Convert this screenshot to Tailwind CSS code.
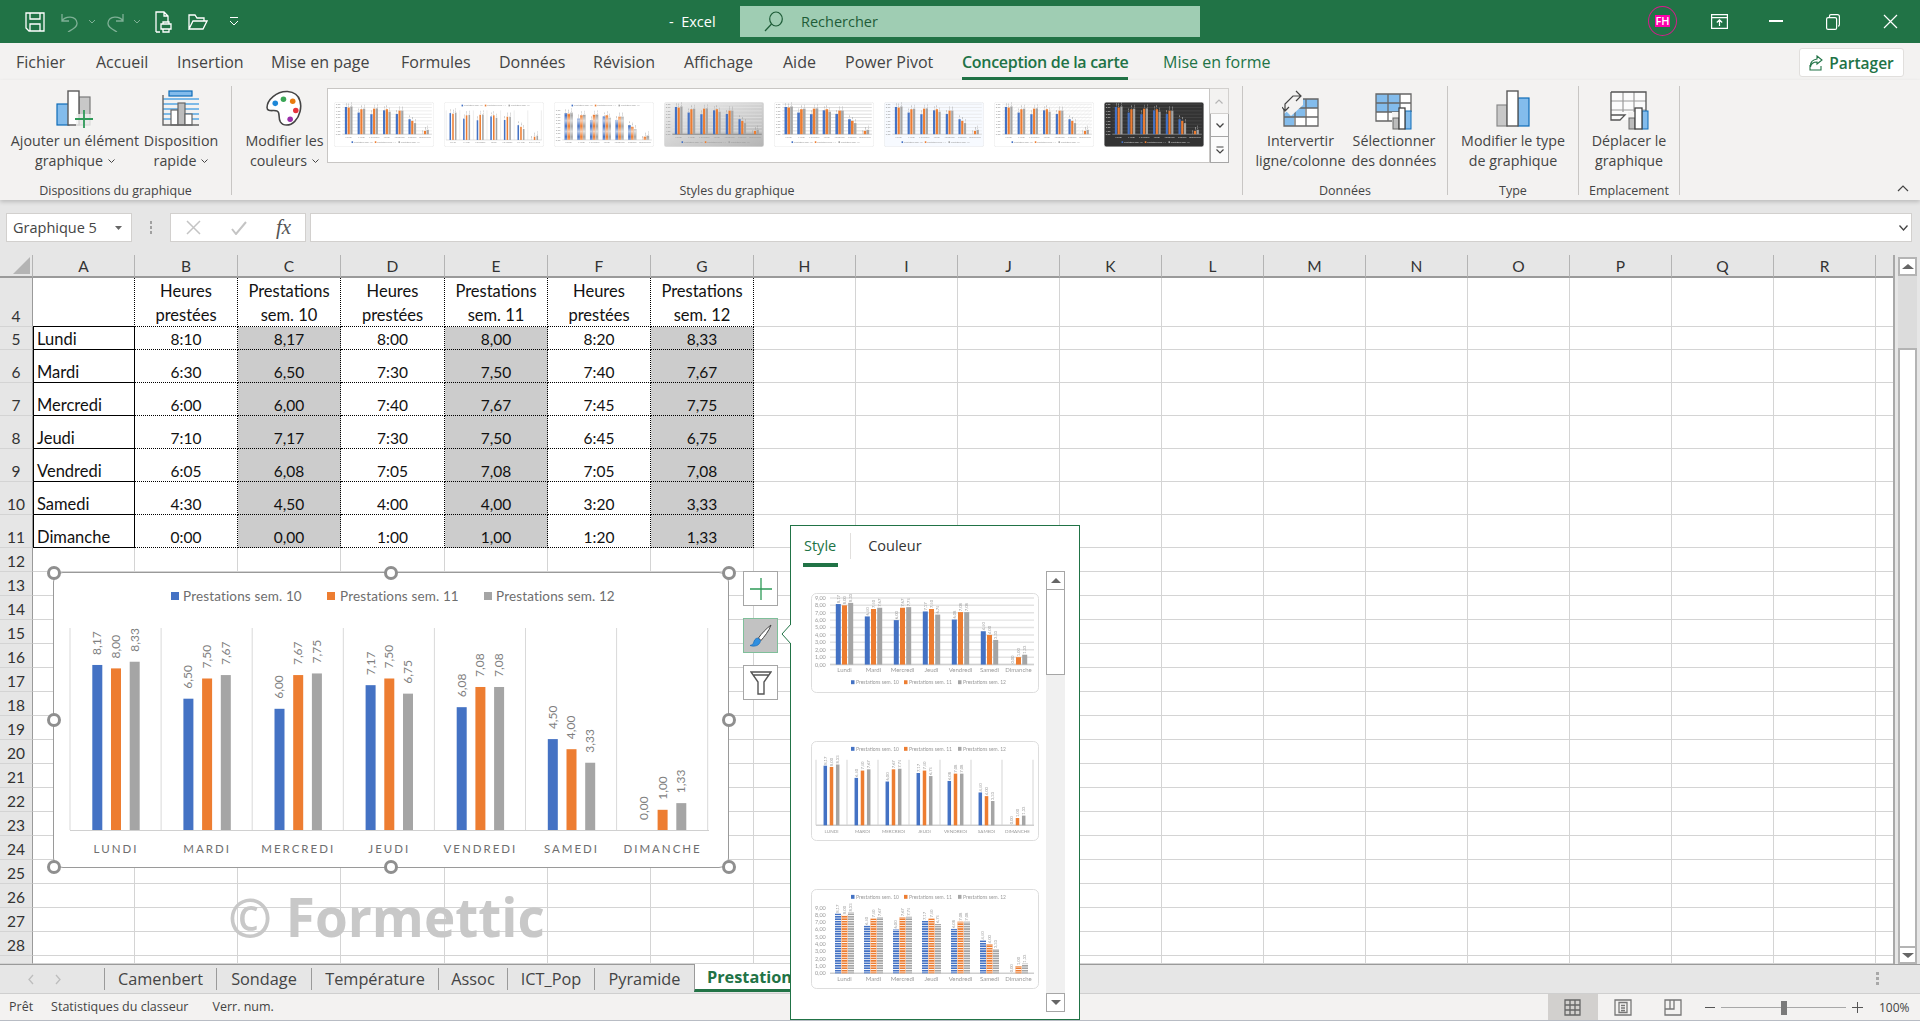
<!DOCTYPE html>
<html lang="fr">
<head>
    <meta charset="UTF-8">
    <title>Excel</title>
    <script src="https://cdn.jsdelivr.net/npm/@tailwindcss/browser@4"></script>
</head>
<body>
<div class="relative w-[1920px] h-[1021px] overflow-hidden flex flex-col bg-[#e6e6e6] font-['Open_Sans',sans-serif] text-[#444444]">

    <!-- Title bar -->
    <div class="h-[43px] shrink-0 bg-[#217346] flex items-center text-white">
        <div class="flex items-center pl-[25px] w-[669px]">
            <svg class="w-[20px] h-[20px]" viewBox="0 0 20 20" fill="none" stroke="#fff" stroke-width="1.3"><path d="M1 1h18v18H4l-3-3zM5 1v6h10V1M5 19v-7h10v7"/></svg>
            <svg class="w-[20px] h-[20px] ml-[15px]" viewBox="0 0 20 20" fill="none" stroke="#7fb096" stroke-width="1.3"><path d="M2 2v7h7M2 9c3-5 14-6 15 2 .5 4-4 6-9 9"/></svg>
            <svg class="w-[8px] h-[5px] ml-[8px]" viewBox="0 0 8 5" fill="none" stroke="#7fb096"><path d="M1 1l3 3 3-3"/></svg>
            <svg class="w-[20px] h-[20px] ml-[9px]" viewBox="0 0 20 20" fill="none" stroke="#7fb096" stroke-width="1.3"><path d="M18 2v7h-7M18 9C15 4 4 3 3 11c-.5 4 4 6 9 9"/></svg>
            <svg class="w-[8px] h-[5px] ml-[8px]" viewBox="0 0 8 5" fill="none" stroke="#7fb096"><path d="M1 1l3 3 3-3"/></svg>
            <svg class="w-[18px] h-[22px] ml-[14px]" viewBox="0 0 18 22" fill="none" stroke="#fff" stroke-width="1.3"><path d="M1 21V1h8l4 4v6M9 1v4h4M1 21h4M6 13h10v5H6zM8 13v-2h6v2M8 18v3h6v-3"/></svg>
            <svg class="w-[20px] h-[16px] ml-[15px]" viewBox="0 0 20 16" fill="none" stroke="#fff" stroke-width="1.3"><path d="M1 15V1h6l2 3h7v3M1 15h14l4-8H5z"/></svg>
            <svg class="w-[10px] h-[9px] ml-[21px]" viewBox="0 0 10 9" fill="none" stroke="#fff"><path d="M1 .5h8M1 4l4 4 4-4"/></svg>
        </div>
        <div class="w-[71px] text-[14.5px] whitespace-nowrap">-&nbsp; Excel</div>
        <div class="w-[460px] h-[31px] bg-[#9fcdb3] flex items-center text-[14.5px] text-[#1e5c38]">
            <svg class="w-[19px] h-[21px] ml-[24px]" viewBox="0 0 19 21" fill="none" stroke="#1e5c38" stroke-width="1.2"><ellipse cx="12" cy="8" rx="6.3" ry="7"/><path d="M7.5 13L1 20"/></svg>
            <span class="ml-[18px]">Rechercher</span>
        </div>
        <div class="flex-1 relative h-full">
            <div class="absolute left-[448px] top-[6px] w-[29px] h-[30px] rounded-[50%] border border-[#d81b8c] flex items-center justify-center">
                <span class="bg-[#ff00aa] text-white text-[11px] leading-[12px] font-semibold">FH</span>
            </div>
            <svg class="absolute left-[511px] top-[14px] w-[17px] h-[15px]" viewBox="0 0 17 15" fill="none" stroke="#fff" stroke-width="1.2"><path d="M.6.6h15.8v13.8H.6zM.6 3.6h15.8M8.5 12V6M5.8 8.5l2.7-2.7 2.7 2.7"/></svg>
            <div class="absolute left-[569px] top-[20px] w-[14px] h-[2px] bg-white"></div>
            <svg class="absolute left-[626px] top-[14px] w-[14px] h-[16px]" viewBox="0 0 14 16" fill="none" stroke="#fff" stroke-width="1.2"><rect x=".6" y="3.6" width="10" height="11.8" rx="1.5"/><path d="M3.5 3.5V2c0-.8.6-1.4 1.4-1.4h6.5c1 0 2 .8 2 2v8c0 1-.6 1.6-1.4 1.6"/></svg>
            <svg class="absolute left-[683px] top-[14px] w-[15px] h-[15px]" viewBox="0 0 15 15" fill="none" stroke="#fff" stroke-width="1.2"><path d="M1 1l13 13M14 1L1 14"/></svg>
        </div>
    </div>

    <!-- Ribbon tabs -->
    <div class="h-[37px] shrink-0 bg-[#f3f2f1] relative flex pl-[16px] pt-[6px] text-[16px] leading-[26px] whitespace-nowrap text-[#444444]">
        <div class="w-[80px]">Fichier</div>
        <div class="w-[81px]">Accueil</div>
        <div class="w-[94px]">Insertion</div>
        <div class="w-[130px]">Mise en page</div>
        <div class="w-[98px]">Formules</div>
        <div class="w-[94px]">Données</div>
        <div class="w-[91px]">Révision</div>
        <div class="w-[99px]">Affichage</div>
        <div class="w-[62px]">Aide</div>
        <div class="w-[117px]">Power Pivot</div>
        <div class="w-[201px] h-[32px] font-semibold text-[#217346]"><span class="inline-block border-b-[4px] border-[#217346] pb-[2px] tracking-[-0.3px]">Conception de la carte</span></div>
        <div class="text-[#217346]">Mise en forme</div>
        <div class="absolute left-[1799px] top-[5px] w-[105px] h-[29px] bg-white border border-[#e1dfdd] rounded-[3px] flex items-center justify-center gap-[6px] text-[#217346] font-semibold text-[15.5px]">
            <svg class="w-[14px] h-[16px]" viewBox="0 0 14 16" fill="none" stroke="#217346" stroke-width="1.1"><path d="M8 1l5 4-5 4V7C4 7 2 9 1.500 12c-.5-4 1-7 6.500-8zM1 10v5h11v-4"/></svg>
            Partager
        </div>
    </div>

    <!-- Ribbon -->
    <div class="h-[120px] shrink-0 bg-[#f3f2f1] shadow-[0_2px_4px_rgba(0,0,0,0.18)] flex pt-[6px] text-[14.25px] leading-[20px] relative z-10">
        <!-- Dispositions du graphique -->
        <div class="w-[232px] h-[109px] border-r border-[#c8c6c4] relative flex pl-[8px]">
            <div class="w-[134px] flex flex-col items-center whitespace-nowrap">
                <svg class="w-[38px] h-[40px] mt-[4px] mb-[1px]" viewBox="0 0 38 40">
                    <rect x="1" y="14" width="12" height="21" fill="#83bcec" stroke="#0e6cb8" stroke-width="1.2"/>
                    <rect x="23" y="7" width="11" height="28" fill="#c8c8c8" stroke="#7a7a7a" stroke-width="1.2"/>
                    <rect x="12" y="1" width="11" height="34" fill="#fff" stroke="#5a5a5a" stroke-width="1.4"/>
                    <rect x="20" y="24" width="16" height="16" fill="#f3f2f1" opacity=".8"/>
                    <path d="M28 20v18M19 29h18" stroke="#2e9a58" stroke-width="1.8"/>
                </svg>
                <div>Ajouter un élément</div>
                <div class="flex items-center gap-[5px]">graphique <svg class="w-[7px] h-[4px]" viewBox="0 0 7 4" fill="none" stroke="#444"><path d="M.5.5l3 3 3-3"/></svg></div>
            </div>
            <div class="w-[78px] flex flex-col items-center whitespace-nowrap">
                <svg class="w-[38px] h-[40px] mt-[4px] mb-[1px]" viewBox="0 0 38 40">
                    <rect x="7" y="1" width="23" height="5" fill="#83bcec" stroke="#0e6cb8" stroke-width="1.2"/>
                    <path d="M1 9h36M1 14h36M1 19h36M1 24h36M1 29h36" stroke="#56a7e4" stroke-width="1.6"/>
                    <rect x="9" y="20" width="7" height="15" fill="#fff" stroke="#666" stroke-width="1.2"/>
                    <rect x="16" y="13" width="7" height="22" fill="#bcbcbc" stroke="#666" stroke-width="1.2"/>
                    <rect x="23" y="24" width="7" height="11" fill="#fff" stroke="#666" stroke-width="1.2"/>
                    <path d="M1 5v30h36" fill="none" stroke="#666" stroke-width="1.4"/>
                </svg>
                <div>Disposition</div>
                <div class="flex items-center gap-[5px]">rapide <svg class="w-[7px] h-[4px]" viewBox="0 0 7 4" fill="none" stroke="#444"><path d="M.5.5l3 3 3-3"/></svg></div>
            </div>
            <div class="absolute bottom-[-6px] left-0 w-[231px] text-center text-[12.5px]">Dispositions du graphique</div>
        </div>

        <!-- Styles du graphique -->
        <div class="w-[1011px] h-[109px] border-r border-[#c8c6c4] relative flex">
            <div class="w-[95px] flex flex-col items-center whitespace-nowrap pl-[10px] mr-0">
                <svg class="w-[37px] h-[37px] mt-[4px] mb-[4px]" viewBox="0 0 36 36">
                    <path d="M21 1.500C10 1 1 10 1 17c0 5 7 2 10 3.500s.5 6 3 10.500c2.500 4 9 4.500 14-.5s7-14 5-20C31.500 5 27 2 21 1.500z" fill="#fff" stroke="#444" stroke-width="1.5"/>
                    <circle cx="9" cy="13" r="2.700" fill="#1e88d8"/><circle cx="17" cy="9" r="2.700" fill="#3aa655"/><circle cx="26" cy="11" r="2.700" fill="#e97a0c"/><circle cx="29" cy="20" r="2.700" fill="#e8333c"/><circle cx="23.500" cy="28.500" r="2.700" fill="#9a2ea8"/>
                </svg>
                <div>Modifier les</div>
                <div class="flex items-center gap-[5px]">couleurs <svg class="w-[7px] h-[4px]" viewBox="0 0 7 4" fill="none" stroke="#444"><path d="M.5.5l3 3 3-3"/></svg></div>
            </div>
            <div class="mt-[2px] w-[902px] h-[75px] flex">
                <div class="w-[883px] h-full bg-white border border-[#c8c6c4] flex gap-[10px] pl-[6px] pt-[13px]">
                    <div data-thumb="1" data-size="r"></div>
                    <div data-thumb="2" data-size="r"></div>
                    <div data-thumb="3" data-size="r"></div>
                    <div data-thumb="4" data-size="r"></div>
                    <div data-thumb="5" data-size="r"></div>
                    <div data-thumb="6" data-size="r"></div>
                    <div data-thumb="7" data-size="r"></div>
                    <div data-thumb="8" data-size="r"></div>
                </div>
                <div class="w-[19px] flex flex-col">
                    <div class="h-[26px] border border-l-0 border-[#d2d0ce] flex items-center justify-center"><svg class="w-[8px] h-[5px]" viewBox="0 0 8 5" fill="none" stroke="#b5b5b5" stroke-width="1.2"><path d="M.5 4.500L4 1l3.500 3.500"/></svg></div>
                    <div class="h-[23px] border border-t-0 border-[#a6a6a6] bg-[#fbfbfb] flex items-center justify-center"><svg class="w-[8px] h-[5px]" viewBox="0 0 8 5" fill="none" stroke="#444" stroke-width="1.3"><path d="M.5.5L4 4 7.500.5"/></svg></div>
                    <div class="h-[26px] border border-t-0 border-[#a6a6a6] bg-[#fbfbfb] flex flex-col items-center justify-center"><svg class="w-[8px] h-[8px]" viewBox="0 0 8 8" fill="none" stroke="#444" stroke-width="1.2"><path d="M.5 1h7M.5 3.500L4 7l3.500-3.500"/></svg></div>
                </div>
            </div>
            <div class="absolute bottom-[-6px] left-0 w-full text-center text-[12.5px]">Styles du graphique</div>
        </div>

        <!-- Données -->
        <div class="w-[205px] h-[109px] border-r border-[#c8c6c4] relative flex">
            <div class="w-[115px] flex flex-col items-center whitespace-nowrap">
                <svg class="w-[38px] h-[40px] mt-[4px] mb-[1px]" viewBox="0 0 38 40">
                    <path d="M2 9h34v27H2z" fill="#fff"/>
                    <path d="M2 36V24L18 9h18v9H23v9H12v9z" fill="#83bcec"/>
                    <path d="M2 9h34v27H2zM2 18h34M2 27h34M13 9v27M24 9v27" fill="none" stroke="#666" stroke-width="1.3"/>
                    <path d="M1 2h20v13L9 26 1 18z" fill="#f3f2f1"/>
                    <path d="M14 1l5 5-5 5M19 6H11L3 14v6M0 17l3 4 4-4" fill="none" stroke="#444" stroke-width="1.200"/>
                </svg>
                <div>Intervertir</div>
                <div>ligne/colonne</div>
            </div>
            <div class="w-[72px] flex flex-col items-center whitespace-nowrap">
                <svg class="w-[38px] h-[40px] mt-[4px] mb-[1px]" viewBox="0 0 38 40">
                    <path d="M1 4h35v27H1z" fill="#fff"/>
                    <path d="M1 4h24v18H1z" fill="#83bcec"/>
                    <path d="M1 4h35v27H1zM1 13h35M1 22h35M13 4v27M25 4v27" fill="none" stroke="#666" stroke-width="1.300"/>
                    <rect x="17" y="22" width="20" height="18" fill="#f3f2f1"/>
                    <rect x="18" y="28" width="6" height="11" fill="#bcbcbc" stroke="#666"/>
                    <rect x="30" y="21" width="6" height="18" fill="#83bcec" stroke="#0e6cb8"/>
                    <rect x="24" y="18" width="6" height="21" fill="#fff" stroke="#444" stroke-width="1.300"/>
                </svg>
                <div>Sélectionner</div>
                <div>des données</div>
            </div>
            <div class="absolute bottom-[-6px] left-0 w-[204px] text-center text-[12.5px]">Données</div>
        </div>

        <!-- Type -->
        <div class="w-[131px] h-[109px] border-r border-[#c8c6c4] relative flex flex-col items-center whitespace-nowrap">
            <svg class="w-[38px] h-[40px] mt-[4px] mb-[1px]" viewBox="0 0 38 40">
                <rect x="3" y="15" width="10" height="21" fill="#c8c8c8" stroke="#8a8a8a" stroke-width="1.200"/>
                <rect x="24" y="8" width="11" height="28" fill="#83bcec" stroke="#0e6cb8" stroke-width="1.200"/>
                <rect x="13" y="1" width="11" height="35" fill="#fff" stroke="#5a5a5a" stroke-width="1.400"/>
            </svg>
            <div>Modifier le type</div>
            <div>de graphique</div>
            <div class="absolute bottom-[-6px] left-0 w-full text-center text-[12.5px]">Type</div>
        </div>

        <!-- Emplacement -->
        <div class="w-[101px] h-[109px] border-r border-[#c8c6c4] relative flex flex-col items-center whitespace-nowrap">
            <svg class="w-[40px] h-[40px] mt-[4px] mb-[1px]" viewBox="0 0 40 40">
                <path d="M2 2h35v25l-3 3H9l-7-1z" fill="#fbfbfb"/>
                <path d="M2 11h35M2 20h35M14 2v20M25 2v20" stroke="#9a9a9a" stroke-width="1.200"/>
                <path d="M2 2h35v25M2 2v28h9l5-5H2" fill="none" stroke="#555" stroke-width="1.300"/>
                <rect x="19" y="22" width="21" height="18" fill="#f3f2f1"/>
                <rect x="20" y="28" width="6" height="11" fill="#bcbcbc" stroke="#666"/>
                <rect x="33" y="21" width="6" height="18" fill="#83bcec" stroke="#0e6cb8"/>
                <rect x="26" y="18" width="7" height="21" fill="#fff" stroke="#444" stroke-width="1.300"/>
            </svg>
            <div>Déplacer le</div>
            <div>graphique</div>
            <div class="absolute bottom-[-6px] left-0 w-full text-center text-[12.5px]">Emplacement</div>
        </div>

        <svg class="absolute left-[1897px] top-[105px] w-[12px] h-[7px]" viewBox="0 0 12 7" fill="none" stroke="#444" stroke-width="1.200"><path d="M1 6l5-5 5 5"/></svg>
    </div>

    <!-- Formula bar -->
    <div class="h-[55px] shrink-0 flex pt-[13px] pl-[6px]">
        <div class="w-[126px] h-[29px] bg-white border border-[#d2d0ce] flex items-center justify-between px-[6px] text-[14.5px]">
            Graphique 5
            <svg class="w-[7px] h-[4px] mr-[3px]" viewBox="0 0 7 4"><path d="M0 0h7L3.500 4z" fill="#666"/></svg>
        </div>
        <div class="w-[38px] h-[29px] flex flex-col items-center justify-center gap-[2px]">
            <div class="w-[2px] h-[3px] bg-[#a0a0a0]"></div><div class="w-[2px] h-[3px] bg-[#a0a0a0]"></div><div class="w-[2px] h-[3px] bg-[#a0a0a0]"></div>
        </div>
        <div class="w-[136px] h-[29px] bg-white border border-[#d2d0ce] flex items-center">
            <svg class="w-[15px] h-[15px] ml-[15px]" viewBox="0 0 15 15" fill="none" stroke="#c4c4c4" stroke-width="1.500"><path d="M1 1l13 13M14 1L1 14"/></svg>
            <svg class="w-[16px] h-[14px] ml-[30px]" viewBox="0 0 16 14" fill="none" stroke="#c4c4c4" stroke-width="2"><path d="M1 8l4 5L15 1"/></svg>
            <span class="ml-[29px] font-['Liberation_Serif',serif] italic text-[21px] text-[#555555]">fx</span>
        </div>
        <div class="ml-[4px] w-[1602px] h-[29px] bg-white border border-[#d2d0ce] flex items-center justify-end pr-[3px]">
            <svg class="w-[9px] h-[6px]" viewBox="0 0 9 6" fill="none" stroke="#444" stroke-width="1.300"><path d="M.5.5L4.500 5 8.500.5"/></svg>
        </div>
    </div>

    <!-- Sheet -->
    <div class="h-[709px] shrink-0 flex bg-[#e6e6e6]">
        <div id="grid" class="w-[1895px] h-full grid grid-cols-[33px_102px_103px_103px_104px_103px_103px_103px_repeat(10,102px)_102px_18px] grid-rows-[23px_49px_23px_repeat(6,33px)_repeat(17,24px)_8px] font-['Lato',sans-serif] text-[15.5px] leading-[19px] text-[#111111] overflow-hidden border-r-2 border-[#a8a8a8]"></div>
        <div class="ml-[3px] w-[19px] h-full flex flex-col pt-[2px]">
            <div class="h-[19px] bg-white border-2 border-[#b4b4b4] flex items-center justify-center"><div class="w-0 h-0 border-x-[6px] border-x-transparent border-b-[5px] border-b-[#666666]"></div></div>
            <div class="h-[72px] bg-[#dcdcdc]"></div>
            <div class="flex-1 bg-white border-x-2 border-t-2 border-[#b4b4b4]"></div>
            <div class="h-[18px] bg-white border-2 border-[#b4b4b4] flex items-center justify-center"><div class="w-0 h-0 border-x-[6px] border-x-transparent border-t-[5px] border-t-[#666666]"></div></div>
        </div>
    </div>

    <!-- Sheet tabs -->
    <div class="h-[29px] shrink-0 bg-[#e6e6e6] border-t border-[#9a9a9a] flex text-[16.3px] text-[#444444] relative">
        <div class="w-[104px] flex items-center pl-[28px] gap-[21px]">
            <svg class="w-[6px] h-[11px]" viewBox="0 0 6 11" fill="none" stroke="#bdbdbd" stroke-width="1.300"><path d="M5 1L1 5.500 5 10"/></svg>
            <svg class="w-[6px] h-[11px]" viewBox="0 0 6 11" fill="none" stroke="#bdbdbd" stroke-width="1.300"><path d="M1 1l4 4.500L1 10"/></svg>
        </div>
        <div class="w-[112px] my-[3px] border-l border-[#9a9a9a] flex items-center justify-center">Camenbert</div>
        <div class="w-[95px] my-[3px] border-l border-[#9a9a9a] flex items-center justify-center">Sondage</div>
        <div class="w-[127px] my-[3px] border-l border-[#9a9a9a] flex items-center justify-center">Température</div>
        <div class="w-[69px] my-[3px] border-l border-[#9a9a9a] flex items-center justify-center">Assoc</div>
        <div class="w-[87px] my-[3px] border-l border-[#9a9a9a] flex items-center justify-center">ICT_Pop</div>
        <div class="w-[100px] my-[3px] border-l border-[#9a9a9a] flex items-center justify-center">Pyramide</div>
        <div class="w-[110px] h-[28px] -mt-px bg-white border-l border-[#9a9a9a] border-b-[3px] border-b-[#217346] pl-[12px] font-bold text-[#217346] leading-[26px] whitespace-nowrap">Prestations</div>
        <div class="absolute left-[1876px] top-[7px] flex flex-col gap-[2px]">
            <div class="w-[3px] h-[3px] bg-[#a8a8a8]"></div><div class="w-[3px] h-[3px] bg-[#a8a8a8]"></div><div class="w-[3px] h-[3px] bg-[#a8a8a8]"></div>
        </div>
    </div>

    <!-- Status bar -->
    <div class="h-[28px] shrink-0 bg-[#f3f2f1] border-t border-[#cfcfcf] border-b border-b-[#b8bcc4] flex items-center text-[12.5px] text-[#444444] relative">
        <span class="ml-[9px]">Prêt</span>
        <span class="ml-[18px]">Statistiques du classeur</span>
        <span class="ml-[24px]">Verr. num.</span>
        <div class="absolute left-[1548px] top-0 w-[50px] h-full bg-[#d2d0ce]"></div>
        <svg class="absolute left-[1564px] top-[5px] w-[17px] h-[17px]" viewBox="0 0 17 17" fill="none" stroke="#666" stroke-width="1.300"><path d="M1 1h15v15H1zM1 6h15M1 11h15M6 1v15M11 1v15"/></svg>
        <svg class="absolute left-[1614px] top-[5px] w-[18px] h-[17px]" viewBox="0 0 18 17" fill="none" stroke="#777" stroke-width="1.300"><path d="M1 1h16v15H1zM5 3.500h8v10H5zM7 6.500h4M7 9h4M7 11.500h4"/></svg>
        <svg class="absolute left-[1664px] top-[5px] w-[18px] h-[17px]" viewBox="0 0 18 17" fill="none" stroke="#777" stroke-width="1.300"><path d="M1 1h16v15H1zM1 10h9V1M6 1v9"/></svg>
        <div class="absolute left-[1705px] top-[13px] w-[10px] h-px bg-[#555555]"></div>
        <div class="absolute left-[1721px] top-[13px] w-[125px] h-px bg-[#a8a8a8]"></div>
        <div class="absolute left-[1781px] top-[7px] w-[6px] h-[14px] bg-[#7a7a7a]"></div>
        <svg class="absolute left-[1852px] top-[8px] w-[11px] h-[11px]" viewBox="0 0 11 11" stroke="#555"><path d="M5.500 0v11M0 5.500h11"/></svg>
        <span class="absolute left-[1879px] top-[5px] text-[12px]">100%</span>
    </div>

    <!-- Watermark -->
    <div class="absolute left-[228px] top-[882px] text-[53px] leading-[70px] font-bold text-[#c8c8c8] whitespace-nowrap">© Formettic</div>

    <!-- Chart -->
    <div class="absolute left-[53px] top-[572px] w-[676px] h-[296px] bg-white border-[1.5px] border-[#9a9a9a] rounded-[10px]">
        <svg id="chart" class="absolute -left-[1.5px] -top-[1.5px]" width="676" height="296" viewBox="53 572 676 296"></svg>
    </div>
    <div class="absolute left-[47px] top-[566px] w-[14px] h-[14px] rounded-full bg-white border-[3px] border-[#8f8f8f]"></div>
    <div class="absolute left-[384px] top-[566px] w-[14px] h-[14px] rounded-full bg-white border-[3px] border-[#8f8f8f]"></div>
    <div class="absolute left-[722px] top-[566px] w-[14px] h-[14px] rounded-full bg-white border-[3px] border-[#8f8f8f]"></div>
    <div class="absolute left-[47px] top-[713px] w-[14px] h-[14px] rounded-full bg-white border-[3px] border-[#8f8f8f]"></div>
    <div class="absolute left-[722px] top-[713px] w-[14px] h-[14px] rounded-full bg-white border-[3px] border-[#8f8f8f]"></div>
    <div class="absolute left-[47px] top-[860px] w-[14px] h-[14px] rounded-full bg-white border-[3px] border-[#8f8f8f]"></div>
    <div class="absolute left-[384px] top-[860px] w-[14px] h-[14px] rounded-full bg-white border-[3px] border-[#8f8f8f]"></div>
    <div class="absolute left-[722px] top-[860px] w-[14px] h-[14px] rounded-full bg-white border-[3px] border-[#8f8f8f]"></div>

    <!-- Chart side buttons -->
    <div class="absolute left-[743px] top-[571px] w-[35px] h-[35px] bg-white border border-[#a6a6a6] flex items-center justify-center">
        <svg class="w-[22px] h-[22px]" viewBox="0 0 22 22" stroke="#2e9a58" stroke-width="1.300"><path d="M11 0v22M0 11h22"/></svg>
    </div>
    <div class="absolute left-[743px] top-[618px] w-[35px] h-[35px] bg-[#c2c2c2] border border-[#7fbf9a] flex items-center justify-center">
        <svg class="w-[24px] h-[24px]" viewBox="0 0 24 24"><path d="M22 1C18 4 12 10 9.500 14l2.500 2.500C15 13 20 7 22 1z" fill="#fff" stroke="#444"/><path d="M9 14c-3 0-4 3-4.500 5-.4 1.500-2 2-3.500 2.500 4 1.500 10 .5 10.500-5z" fill="#2f8fe0" stroke="#1b6cb4" stroke-width=".7"/></svg>
    </div>
    <div class="absolute left-[743px] top-[665px] w-[35px] h-[35px] bg-white border border-[#a6a6a6] flex items-center justify-center">
        <svg class="w-[22px] h-[24px]" viewBox="0 0 22 24" fill="none" stroke="#555" stroke-width="1.400"><path d="M1 1h20l-7 10v12H8V11zM3 4h16"/></svg>
    </div>

    <!-- Style pane -->
    <div class="absolute left-[790px] top-[525px] w-[290px] h-[495px] bg-white border border-[#217346] font-['Open_Sans',sans-serif]">
        <svg class="absolute -left-[10px] top-[97px] w-[10px] h-[22px]" viewBox="0 0 10 22"><path d="M10 1L1 11l9 10" fill="#fff" stroke="#217346"/></svg>
        <div class="h-[37px] flex items-center text-[14.5px] pt-[2px]">
            <span class="ml-[13px] text-[#217346]">Style</span>
            <div class="ml-[14px] w-px h-[26px] bg-[#e1dfdd]"></div>
            <span class="ml-[17px] text-[#333333]">Couleur</span>
        </div>
        <div class="ml-[12px] w-[35px] h-[4px] bg-[#217346]"></div>
        <div class="absolute left-[20px] top-[67px] flex flex-col gap-[48px]">
            <div data-thumb="1" data-size="p"></div>
            <div data-thumb="2" data-size="p"></div>
            <div data-thumb="3" data-size="p"></div>
        </div>
        <div class="absolute left-[255px] top-[45px] w-[19px] h-[441px] bg-[#f0f0f0] flex flex-col">
            <div class="h-[19px] bg-white border border-[#a6a6a6] flex items-center justify-center"><div class="w-0 h-0 border-x-[5px] border-x-transparent border-b-[5px] border-b-[#666666]"></div></div>
            <div class="h-[85px] bg-white border-x border-b border-[#a6a6a6]"></div>
            <div class="flex-1"></div>
            <div class="h-[19px] bg-white border border-[#a6a6a6] flex items-center justify-center"><div class="w-0 h-0 border-x-[5px] border-x-transparent border-t-[5px] border-t-[#666666]"></div></div>
        </div>
    </div>
</div>

<script>
    const days = ['Lundi', 'Mardi', 'Mercredi', 'Jeudi', 'Vendredi', 'Samedi', 'Dimanche']
    const sem10 = ['8,17', '6,50', '6,00', '7,17', '6,08', '4,50', '0,00']
    const sem11 = ['8,00', '7,50', '7,67', '7,50', '7,08', '4,00', '1,00']
    const sem12 = ['8,33', '7,67', '7,75', '6,75', '7,08', '3,33', '1,33']
    const hours = [
        ['8:10', '8:00', '8:20'], ['6:30', '7:30', '7:40'], ['6:00', '7:40', '7:45'], ['7:10', '7:30', '6:45'],
        ['6:05', '7:05', '7:05'], ['4:30', '4:00', '3:20'], ['0:00', '1:00', '1:20']
    ]
    const num = s => parseFloat(s.replace(',', '.'))

    // grid cells
    let html = ''
    const letters = 'ABCDEFGHIJKLMNOPQR'
    const headCell = 'bg-[#e6e6e6] border-r border-[#b4b4b4] border-b-2 border-b-[#9a9a9a] flex items-center justify-center pt-[2px] text-[#333333]'
    const rowHead = 'bg-[#e6e6e6] border-r border-[#9a9a9a] border-b border-b-[#d4d4d4] flex items-end justify-center text-[#333333]'
    const plain = 'bg-white border-r border-b border-[#d4d4d4]'
    const dotted = 'bg-white border-r border-b border-dotted border-black flex items-end justify-center'
    const shaded = 'bg-[#cccccc] border-r border-b border-dotted border-black flex items-end justify-center'
    const dayCell = 'bg-white border-x border-b border-black flex items-end pl-[3px] text-[16.5px]'

    html += '<div class="bg-[#e6e6e6] border-r border-[#b4b4b4] border-b-2 border-b-[#9a9a9a] flex items-end justify-end p-[2px]"><div class="w-0 h-0 border-l-[17px] border-l-transparent border-b-[17px] border-b-[#b4b4b4]"></div></div>'
    for (const l of letters) html += `<div class="${headCell}">${l}</div>`
    html += `<div class="${headCell}"></div>`

    for (let r = 4; r <= 29; r++) {
        html += `<div class="${rowHead}">${r < 29 ? r : ''}</div>`
        for (let c = 0; c < 19; c++) {
            if (r == 4 && c == 0) html += '<div class="bg-white border-r border-r-black border-b border-b-black [border-right-style:dotted]"></div>'
            else if (r == 4 && c < 7) {
                const top = c % 2 ? 'Heures' : 'Prestations'
                const bottom = c % 2 ? 'prestées' : 'sem. ' + (9 + c / 2)
                html += `<div class="bg-white border-r border-b border-dotted border-black text-center text-[16.5px] leading-[24px] pt-[1px]"><div>${top}</div><div>${bottom}</div></div>`
            } else if (r >= 5 && r <= 11 && c == 0) {
                html += `<div class="${dayCell}">${days[r - 5]}</div>`
            } else if (r >= 5 && r <= 11 && c < 7) {
                const i = r - 5
                const vals = [hours[i][0], sem10[i], hours[i][1], sem11[i], hours[i][2], sem12[i]]
                html += `<div class="${c % 2 ? dotted : shaded}">${vals[c - 1]}</div>`
            } else html += `<div class="${plain}"></div>`
        }
    }
    document.getElementById('grid').innerHTML = html

    // main chart
    const colors = ['#4472c4', '#ed7d31', '#a5a5a5']
    const series = [sem10, sem11, sem12]
    let svg = ''
    const legend = [[171, 183, 'Prestations sem. 10'], [327, 340, 'Prestations sem. 11'], [484, 496, 'Prestations sem. 12']]
    legend.forEach((l, i) => {
        svg += `<rect x="${l[0]}" y="592" width="8" height="8" fill="${colors[i]}"/>`
        svg += `<text x="${l[1]}" y="601" font-family="Lato" font-size="13.500" letter-spacing=".15" fill="#6e6e6e">${l[2]}</text>`
    })
    for (let i = 0; i <= 7; i++) {
        const x = 70 + i * 91.1
        svg += `<path d="M${x} 628V830" stroke="#d9d9d9"/>`
    }
    svg += '<path d="M70 830.500H709" stroke="#d0d0d0"/>'
    days.forEach((d, i) => {
        const cx = 116 + i * 91.1
        series.forEach((s, k) => {
            const v = num(s[i])
            const h = v * 20.2
            const x = cx + (k - 1) * 18.7 - 5
            if (v > 0) svg += `<rect x="${x}" y="${830 - h}" width="10" height="${h}" fill="${colors[k]}"/>`
            const y = 830 - h - 10
            svg += `<text x="${x + 9}" y="${y}" transform="rotate(-90 ${x + 9} ${y})" font-family="Lato" font-size="12" fill="#7f7f7f">${s[i]}</text>`
        })
        svg += `<text x="${cx}" y="853" text-anchor="middle" font-family="Lato" font-size="11.500" letter-spacing="2" fill="#6e6e6e">${d.toUpperCase()}</text>`
    })
    document.getElementById('chart').innerHTML = svg

    // gallery thumbnails
    const looks = {
        1: { legend: 'bottom', hgrid: true },
        2: { legend: 'top', vgrid: true, thin: true, upper: true },
        3: { legend: 'top', striped: true },
        4: { legend: 'bottom', hgrid: true, grad: true, axis: '#555' },
        5: { legend: 'bottom', hgrid: true, wide: true, greyGrid: true },
        6: { legend: 'bottom', hgrid: true, bg: '#f7faff' },
        7: { legend: 'bottom', hgrid: true, hatch: true },
        8: { legend: 'bottom', hgrid: true, bg: '#333333', text: '#cfcfcf', axis: '#999', grid: '#4d4d4d' }
    }
    let uid = 0
    function thumb(n, size) {
        const o = looks[n]
        uid++
        const bg = o.bg || '#fff'
        const txt = o.text || '#9a9a9a'
        const grid = o.grid || (o.greyGrid ? '#cccccc' : '#e3e3e3')
        const fill = o.grad ? `url(#g${uid})` : bg
        const top = o.legend == 'top' ? 19 : 5
        const base = o.legend == 'top' ? 86 : 73
        const unit = (base - top) / 9
        const x0 = o.vgrid ? 5 : 19
        const pitch = o.vgrid ? 31 : 29
        const bw = o.thin ? 3.500 : o.striped || o.wide ? 6 : 5
        const gap = o.thin ? 6.200 : o.striped || o.wide ? 6.500 : 6.200
        let s = `<defs><linearGradient id="g${uid}" x1="0" y1="0" x2="1" y2="1"><stop offset="0" stop-color="#f0f0f0"/><stop offset="1" stop-color="#b4b4b4"/></linearGradient><pattern id="h${uid}" width="6" height="6" patternUnits="userSpaceOnUse" patternTransform="rotate(45)"><rect width="6" height="6" fill="#fff"/><path d="M0 0V6" stroke="#e0e0e0"/></pattern><pattern id="b${uid}" width="4" height="2.500" patternUnits="userSpaceOnUse"><rect width="4" height="1.600" fill="#fff" fill-opacity="0"/><rect y="1.700" width="4" height=".8" fill="#fff"/></pattern></defs>`
        s += `<rect x=".5" y=".5" width="227" height="101" rx="5" fill="${fill}" stroke="#dddddd"/>`
        if (o.hatch) s += `<rect x="${x0}" y="${top}" width="204" height="${base - top}" fill="url(#h${uid})"/>`
        if (o.hgrid) for (let i = 0; i <= 9; i++) s += `<path d="M${x0} ${base - i * unit}H223" stroke="${grid}" stroke-width="1.500"/>`
        if (o.vgrid) for (let i = 0; i <= 7; i++) s += `<path d="M${x0 + i * pitch} ${top}V${base}" stroke="${grid}" stroke-width="1.500"/>`
        if (!o.vgrid) for (let i = 0; i <= 9; i++) s += `<text x="4" y="${base - i * unit + 2}" font-family="Lato" font-size="5.500" fill="${txt}">${i},00</text>`
        s += `<path d="M${x0} ${base}H223" stroke="${o.axis || '#cfcfcf'}" stroke-width="1.500"/>`
        days.forEach((d, i) => {
            const cx = x0 + pitch * (i + .5)
            series.forEach((ser, k) => {
                const v = num(ser[i])
                const h = v * unit
                const x = cx + (k - 1) * gap - bw / 2
                if (v > 0) {
                    s += `<rect x="${x}" y="${base - h}" width="${bw}" height="${h}" fill="${colors[k]}"/>`
                    if (o.striped) s += `<rect x="${x}" y="${base - h}" width="${bw}" height="${h}" fill="url(#b${uid})"/>`
                }
                const y = base - h - 1
                s += `<text x="${x + bw / 2 + 1.500}" y="${y}" transform="rotate(-90 ${x + bw / 2 + 1.500} ${y})" font-family="Lato" font-size="4.200" fill="${txt}">${ser[i]}</text>`
            })
            s += `<text x="${cx}" y="${base + 8}" text-anchor="middle" font-family="Lato" font-size="${o.upper ? 4.600 : 6}" fill="${txt}">${o.upper ? d.toUpperCase() : d}</text>`
        })
        const ly = o.legend == 'top' ? 10 : 93
        ;[[40, 'Prestations sem. 10'], [93, 'Prestations sem. 11'], [147, 'Prestations sem. 12']].forEach((l, k) => {
            s += `<rect x="${l[0]}" y="${ly - 4}" width="3.500" height="4" fill="${colors[k]}"/><text x="${l[0] + 5}" y="${ly}" font-family="Lato" font-size="5" fill="${txt}">${l[1]}</text>`
        })
        const w = size == 'r' ? 100 : 228
        const h = size == 'r' ? 45 : 100
        return `<svg class="block blur-[0.4px]" width="${w}" height="${h}" viewBox="0 0 228 102" preserveAspectRatio="none">${s}</svg>`
    }
    document.querySelectorAll('[data-thumb]').forEach(el => {
        el.innerHTML = thumb(el.dataset.thumb, el.dataset.size)
    })
</script>
</body>
</html>
